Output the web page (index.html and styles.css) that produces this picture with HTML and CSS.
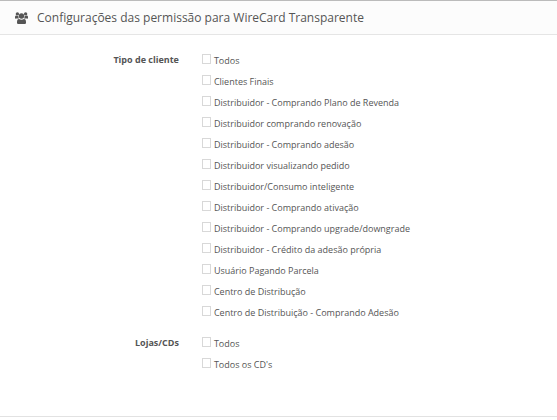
FILE: index.html
```
<!DOCTYPE html>
<html lang="pt-br">
<head>
  <meta charset="UTF-8" />
  <meta name="viewport" content="width=device-width, initial-scale=1.0" />
  <title>Configurações das permissão</title>
  <link rel="stylesheet" href="styles.css">
</head>
<body>

  <div class="widget-box">
    <div class="widget-title">
      <svg class="icon" viewBox="0 0 13 12" aria-hidden="true">
        <circle cx="2.4" cy="1.9" r="1.7"/>
        <circle cx="10.6" cy="1.9" r="1.7"/>
        <circle cx="6.5" cy="4" r="2.7"/>
        <path d="M0 6.6V5q0-1.5 1-1.5 1.2.6 2.3.4.1 1.500.8 2.700H1Q0 6.800 0 6.200zM13 6.200V5q0-1.500-1-1.500-1.200.600-2.300.400-.1 1.500-.8 2.700H12q1 .2 1-.4z"/>
        <path d="M4 7q2.500 1.500 5 0 2 0 2 3.300V11q0 1-1.200 1H3.200Q2 12 2 11v-.7Q2 7 4 7z"/>
      </svg>
      <h5>Configurações das permissão para WireCard Transparente</h5>
    </div>

    <form class="widget-content">
      <div class="form-group" role="group" aria-labelledby="tipoCliente">
        <div class="control-label" id="tipoCliente">Tipo de cliente</div>
        <div class="controls">
          <label class="checkbox"><input type="checkbox" name="cliente"> Todos</label>
          <label class="checkbox"><input type="checkbox" name="cliente"> Clientes Finais</label>
          <label class="checkbox"><input type="checkbox" name="cliente"> Distribuidor - Comprando Plano de Revenda</label>
          <label class="checkbox"><input type="checkbox" name="cliente"> Distribuidor comprando renovação</label>
          <label class="checkbox"><input type="checkbox" name="cliente"> Distribuidor - Comprando adesão</label>
          <label class="checkbox"><input type="checkbox" name="cliente"> Distribuidor visualizando pedido</label>
          <label class="checkbox"><input type="checkbox" name="cliente"> Distribuidor/Consumo inteligente</label>
          <label class="checkbox"><input type="checkbox" name="cliente"> Distribuidor - Comprando ativação</label>
          <label class="checkbox"><input type="checkbox" name="cliente"> Distribuidor - Comprando upgrade/downgrade</label>
          <label class="checkbox"><input type="checkbox" name="cliente"> Distribuidor - Crédito da adesão própria</label>
          <label class="checkbox"><input type="checkbox" name="cliente"> Usuário Pagando Parcela</label>
          <label class="checkbox"><input type="checkbox" name="cliente"> Centro de Distribução</label>
          <label class="checkbox"><input type="checkbox" name="cliente"> Centro de Distribuição - Comprando Adesão</label>
        </div>
      </div>

      <div class="form-group" role="group" aria-labelledby="lojas">
        <div class="control-label" id="lojas">Lojas/CDs</div>
        <div class="controls">
          <label class="checkbox"><input type="checkbox" name="loja"> Todos</label>
          <label class="checkbox"><input type="checkbox" name="loja"> Todos os CD's</label>
        </div>
      </div>
    </form>
  </div>

</body>
</html>
```

FILE: styles.css
```
* {
  margin: 0;
  padding: 0;
  box-sizing: border-box;
}

body {
  background-color: #fff;
  color: #555;
  font-family: 'Open Sans', sans-serif;
  font-size: 9px;
}

.widget-box {
  border-top: 1px solid #bbb;
  border-bottom: 1px solid #e2e2e2;
  box-shadow: 0 1px 0 #eee;
}

.widget-title {
  display: flex;
  align-items: center;
  gap: 9px;
  padding: 0 15px;
  background-color: #fcfcfc;
  border-bottom: 1px solid #e5e5e5;
}

.widget-title .icon {
  width: 13px;
  height: 12px;
  fill: #555;
}

.widget-title h5 {
  font-size: 12px;
  font-weight: 400;
  line-height: 33px;
}

.widget-content {
  padding: 15px 0 31px 1px;
}

.form-group {
  display: flex;
  gap: 23px;
  margin-bottom: 10px;
}

.control-label {
  width: 32%;
  flex-shrink: 0;
  font-weight: 700;
  line-height: 20px;
  text-align: right;
}

.controls {
  flex: 1;
}

.checkbox {
  display: flex;
  align-items: center;
  gap: 3px;
  line-height: 21px;
}

.checkbox input {
  appearance: none;
  width: 9px;
  height: 10px;
  margin-bottom: 3px;
  border: 1px solid #d8d8d8;
  background-color: #fff;
}

.checkbox input:checked {
  background-color: #555;
}
```
